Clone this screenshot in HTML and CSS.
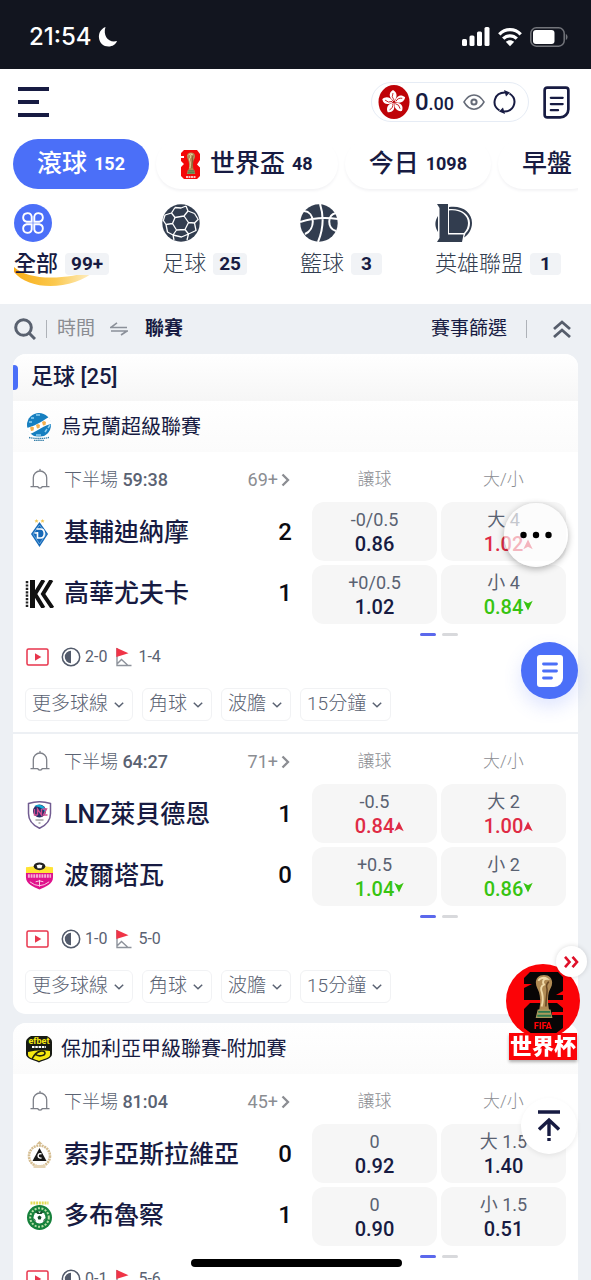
FILE: index.html
```html
<!DOCTYPE html>
<html lang="zh-Hant">
<head>
<meta charset="utf-8">
<meta name="viewport" content="width=device-width, initial-scale=1">
<title>滾球</title>
<link rel="stylesheet" href="styles.css">
</head>
<body>
<svg class="sprite" aria-hidden="true">
  <symbol id="bell" viewBox="0 0 20 22"><path d="M3.3 17.5V9.2a6.7 6.7 0 0 1 13.4 0v8.3M1 18.2h6.8c.3 1.800 4.100 1.800 4.400 0H19M10 2.300V.8" fill="none" stroke="#7d8088" stroke-width="1.300" stroke-linecap="round"/></symbol>
  <symbol id="next" viewBox="0 0 8 14"><path d="M1 1.500 6.500 7 1 12.500" fill="none" stroke="#8b8d92" stroke-width="2.300"/></symbol>
  <symbol id="down" viewBox="0 0 10 6"><path d="M.8.8 5 4.800 9.200.8" fill="none" stroke="#5a6272" stroke-width="1.500"/></symbol>
  <symbol id="live" viewBox="0 0 24 18"><rect x="1" y="1" width="21" height="16" rx="1.500" fill="#fff" stroke="#e8354c" stroke-width="1.500"/><path d="M9 5.300v7.400L15.300 9z" fill="#e8354c"/></symbol>
  <symbol id="half" viewBox="0 0 20 20"><circle cx="10" cy="10" r="8.700" fill="none" stroke="#525a6b" stroke-width="1.500"/><path d="M10 3.800a6.200 6.200 0 0 0 0 12.400z" fill="#525a6b"/></symbol>
  <symbol id="corner" viewBox="0 0 18 20"><path d="M2 1v17.500h14.500M2.500 16.500 6.500 12.500l6 5.500" fill="none" stroke="#8d929b" stroke-width="1.400"/><path d="M1.300.8 13.500 6.300 1.300 10z" fill="#f03447"/></symbol>
  <symbol id="up-arrow" viewBox="0 0 10 11"><path d="M5 .5 9.700 10.300 5 7.800.3 10.300z"/></symbol>
  <symbol id="down-arrow" viewBox="0 0 10 11"><path d="M5 10.500.3.700 5 3.200 9.700.7z"/></symbol>
  <symbol id="trophy" viewBox="0 0 20 48"><path d="M10 1c5.500 0 8.500 3.500 8.500 8 0 4-2.500 6.500-3.500 10-1 4-1.200 10 0 17l1.500 5H4l1.300-5c1.200-7 .8-12-.5-17C4 16 1.500 13 1.500 9c0-4.500 3-8 8.500-8z" fill="#b18b54"/><path d="M4 7c2-3 6-4 9-2-4 0-5 3-3 6-3 1-4 5-2 9 1 4 1 9-.5 14" fill="none" stroke="#efd9a7" stroke-width="2"/><path d="M15 8c-2 2-3 4-2 7s-1 8-1 19" fill="none" stroke="#684621" stroke-width="1.600"/><path d="M3.500 37h13.300l2 9H1.300z" fill="#a99a5d"/><path d="M4 39.500h12.500M3 43.500h14.500" stroke="#2c784c" stroke-width="2"/></symbol>
  <symbol id="slip" viewBox="0 0 26 32"><path d="M4 1.500h18a2.500 2.500 0 0 1 2.500 2.500v18.500a8 8 0 0 1-8 8H4A2.500 2.500 0 0 1 1.500 28V4A2.500 2.500 0 0 1 4 1.500z" fill="#fff" stroke="#171b42" stroke-width="2.600"/><path d="M7.500 11.500h11.500M7.500 17.500h11.500M7.500 23.500h7" stroke="#171b42" stroke-width="2.200" stroke-linecap="round"/></symbol>
</svg>

<div class="app">
  <div class="status">
    <div class="status-left"><span class="clock">21:54</span>
      <svg width="20" height="22" viewBox="0 0 20 22"><path d="M7.500 1C2.500 3 .5 7.500 1 12c.6 5 4.500 8.500 9.500 8.500 4 0 7.300-2.200 8.500-5.500C11 17.500 4.500 10 7.500 1z" fill="#fff"/></svg>
    </div>
    <div class="status-right">
      <svg width="28" height="20" viewBox="0 0 28 20" fill="#fff"><rect x="0" y="12" width="5" height="7" rx="1.500"/><rect x="7.500" y="8.500" width="5" height="10.500" rx="1.500"/><rect x="15" y="4.500" width="5" height="14.500" rx="1.500"/><rect x="22.500" y="0" width="5" height="19" rx="1.500"/></svg>
      <svg width="24" height="20" viewBox="0 0 24 20"><g fill="none" stroke="#fff" stroke-width="3.300"><path d="M1.300 7.300c6-6.200 15.400-6.200 21.400 0"/><path d="M5.200 11.700c3.900-3.900 9.700-3.900 13.600 0"/></g><path d="M7.800 14.800c2.500-2.200 5.900-2.200 8.400 0L12 19.200z" fill="#fff"/></svg>
      <svg width="38" height="20" viewBox="0 0 38 20"><rect x=".8" y=".8" width="33.400" height="18.400" rx="5.500" fill="none" stroke="#73757b" stroke-width="1.500"/><rect x="3" y="3" width="21.500" height="14" rx="3" fill="#fff"/><path d="M35.800 7c2.300 1 2.300 5 0 6z" fill="#73757b"/></svg>
    </div>
  </div>

  <header class="top">
    <button class="plain" aria-label="選單"><svg width="31" height="30" viewBox="0 0 31 30"><path d="M0 2h31M0 15h21M0 28h31" stroke="#171b42" stroke-width="4"/></svg></button>
    <div class="top-right">
      <div class="wallet">
        <svg width="32" height="34" viewBox="0 0 32 34"><ellipse cx="16" cy="17" rx="15.500" ry="17" fill="#bf0308"/><g transform="translate(16 17)" fill="#fff"><path d="M0-1C-5-4-6-9-1-12c4 2 5 7 1 11z"/><path transform="rotate(72)" d="M0-1C-5-4-6-9-1-12c4 2 5 7 1 11z"/><path transform="rotate(144)" d="M0-1C-5-4-6-9-1-12c4 2 5 7 1 11z"/><path transform="rotate(216)" d="M0-1C-5-4-6-9-1-12c4 2 5 7 1 11z"/><path transform="rotate(288)" d="M0-1C-5-4-6-9-1-12c4 2 5 7 1 11z"/></g><g transform="translate(16 17)" fill="none" stroke="#bf0308" stroke-width=".8"><path d="M0-2Q-3-5-1-9"/><path transform="rotate(72)" d="M0-2Q-3-5-1-9"/><path transform="rotate(144)" d="M0-2Q-3-5-1-9"/><path transform="rotate(216)" d="M0-2Q-3-5-1-9"/><path transform="rotate(288)" d="M0-2Q-3-5-1-9"/></g></svg>
        <span class="balance"><b>0</b>.00</span>
        <button class="plain" aria-label="顯示餘額"><svg width="22" height="18" viewBox="0 0 22 18" fill="none" stroke="#656b78" stroke-width="1.500"><path d="M1 9c5.500-9.500 14.500-9.500 20 0-5.500 9.500-14.500 9.500-20 0z"/><circle cx="11" cy="9" r="2.600" stroke-width="2"/></svg></button>
        <button class="plain" aria-label="重新整理"><svg width="23" height="24" viewBox="0 0 23 24"><path d="M6.500 20.500C-2 15 1 2.500 12 2.500M16.500 3.500c8.500 5.500 5.500 18-5.500 18" fill="none" stroke="#171b42" stroke-width="2"/><path d="M11 0l6 2.500-4 4zM12 24l-6-2.500 4-4z" fill="#171b42"/></svg></button>
      </div>
      <button class="plain" aria-label="注單"><svg width="27" height="33"><use href="#slip"/></svg></button>
    </div>
  </header>

  <nav class="tabs">
    <button class="tab active">滾球 <span>152</span></button>
    <button class="tab featured"><svg width="20" height="29" viewBox="0 0 20 29"><path d="M3 0h13l3 4v6l-3 4.500 3 3V26l-3 3H3l-3-3v-9l3-3-3-3V8h3V6H0V3z" fill="#f30808"/><use href="#trophy" x="5" y="2" width="10" height="23"/><path d="M5 27h10" stroke="#fff" stroke-width="1.500" stroke-dasharray="2 .5"/></svg>世界盃 <span>48</span></button>
    <button class="tab">今日 <span>1098</span></button>
    <button class="tab">早盤</button>
  </nav>

  <nav class="sports">
    <button class="sport selected">
      <svg width="38" height="38" viewBox="0 0 38 38"><circle cx="19" cy="19" r="19" fill="#4b6ff8"/><g fill="none" stroke="#fff" stroke-width="1.900"><path d="M17.700 17.700h-5a4.300 4.300 0 1 1 5-5zM20.300 17.700h5a4.300 4.300 0 1 0-5-5zM17.700 20.300h-5a4.300 4.300 0 1 0 5 5zM20.300 20.300h5a4.300 4.300 0 1 1-5 5z"/></g></svg>
      <span class="sport-label">全部 <b>99+</b></span>
      <svg class="swoosh" width="82" height="20" viewBox="0 0 82 20"><defs><linearGradient id="gold"><stop stop-color="#f8ad17"/><stop offset=".5" stop-color="#fbc94f"/><stop offset="1" stop-color="#fff3d4"/></linearGradient></defs><path d="M0 0c14 13 48 14 82 3C60 23 16 25 0 5z" fill="url(#gold)"/></svg>
    </button>
    <button class="sport">
      <svg width="38" height="38" viewBox="0 0 38 38"><circle cx="19" cy="19" r="18.700" fill="#323d4f"/><g fill="none" stroke="#fff" stroke-width="1.300" stroke-linejoin="round"><path d="M13 13.500l9-1.500 4.500 6.500-3.500 7-8.500.5-4-6.500zM13 13.500 9.500 9 13 3.500M22 12l4-5-2-5M26.500 18.500l6 .5 4-4M23 25.500l3.500 4.500-1.500 6M14.500 26l-3.500 5 1 5M10.500 19.500 4 20.500 1 16M9.500 9 3 11M26 7l6.500 2.500M32.500 19 34 26.500l-7.500 3.500M4 20.500 5.500 28l5.500 3M26.500 30l-7 3-8.500-2M13 3.500l6 .5 5-2M32.500 9.500 36 15M3 11l-1.500 5"/></g></svg>
      <span class="sport-label">足球 <b>25</b></span>
    </button>
    <button class="sport">
      <svg width="38" height="38" viewBox="0 0 38 38"><circle cx="19" cy="19" r="18.700" fill="#323d4f"/><path d="M0 18c12-4 25-5 38-3M20 0c4 12 3 26-2 38M4 7c11 1 12 18 1 23M36 9c-9 2-9 15 0 18" fill="none" stroke="#fff" stroke-width="2"/></svg>
      <span class="sport-label">籃球 <b>3</b></span>
    </button>
    <button class="sport">
      <svg width="38" height="38" viewBox="0 0 38 38"><path d="M14 3c13-2 23 5 23 16 0 7-4 12-8 14.500l1.500-4C34 26 35 23 35 19c0-9-9-15-21-14z" fill="#323d4f"/><path d="M14 6.500c10-1.500 19 4 19 12.500 0 4-1.500 7-4 10H14zM2 0h11v30.500h15.500L27 38H2l2.500-4V4zM3 12v16c-3.500-5-3.500-11 0-16z" fill="#323d4f"/></svg>
      <span class="sport-label">英雄聯盟 <b>1</b></span>
    </button>
  </nav>

  <main class="content">
    <div class="filters">
      <div class="filter-group">
        <button class="plain" aria-label="搜尋"><svg width="22" height="22" viewBox="0 0 22 22" fill="none" stroke="#59616f" stroke-width="3"><circle cx="9.500" cy="9.500" r="7.800"/><path d="m15 15 6 6"/></svg></button>
        <i class="bar"></i>
        <button class="plain muted">時間</button>
        <svg class="swap" width="18" height="14" viewBox="0 0 18 14" fill="none" stroke="#8b9099" stroke-width="1.600"><path d="M0 5.500h17M7 .8 1 5.300M1 9h17M17 9l-6 4"/></svg>
        <button class="plain strong">聯賽</button>
      </div>
      <div class="filter-group">
        <button class="plain picker">賽事篩選</button>
        <i class="bar wide"></i>
        <button class="plain" aria-label="全部收合"><svg width="18" height="18" viewBox="0 0 18 18" fill="none" stroke="#565d6b" stroke-width="2.800"><path d="m1 9 8-7 8 7M1 17l8-7 8 7"/></svg></button>
      </div>
    </div>

    <section class="card">
      <h2 class="card-title">足球 [25]</h2>
      <h3 class="league"><svg width="28" height="28" viewBox="0 0 28 28"><circle cx="14" cy="12" r="12" fill="#167fc0"/><path d="M1 15C8 14 16 9 24 4l3 7C19 12 13 18 5 21z" fill="#fff"/><path d="M6 5h3m2-3h4M4 9h3m13 10 2-3m1-1 2-3M11 22h5" stroke="#8fd0f0" stroke-width="1.500"/><g fill="#f5b04e"><path d="M5 14.500l2-1 2 1-.5 3-2.500.5zM11 12l2-1 2 1-.5 3-2.500.5zM17 9l2-1 2 1-.5 3-2.500.5z"/></g><path d="M4 22c6 2 14 2 20 0v3c-6 2-14 2-20 0z" fill="#fff"/><path d="M4 24.500q10 2 20 0M9 27.300h10" fill="none" stroke="#347ea8" stroke-width="1.300" stroke-dasharray="1.500 .6"/></svg>烏克蘭超級聯賽</h3>

      <article class="match">
        <div class="info">
          <div class="match-head"><span class="logo"><svg width="20" height="23"><use href="#bell"/></svg></span><span>下半場 <b>59:38</b></span><a href="#" class="more">69+<svg width="9" height="14"><use href="#next"/></svg></a></div>
          <div class="team"><svg class="logo" width="28" height="28" viewBox="0 0 28 28"><path d="m14 3 8.500 12L14 28 5.500 15z" fill="#1769b7"/><path d="m14 6 6.500 9L14 25 7.500 15z" fill="none" stroke="#74b3e6" stroke-width=".8"/><path d="M11 10h4c5 0 5 9 0 9h-3v-6M9 14h3" fill="none" stroke="#fff" stroke-width="1.600"/><path d="m11 0 .6 1.200 1.400.2-1 1 .3 1.400-1.300-.7-1.300.7.300-1.400-1-1 1.400-.2zM17 0l.6 1.200 1.400.2-1 1 .3 1.400-1.300-.7-1.300.7.300-1.400-1-1 1.400-.2z" fill="#f0c95a"/></svg><strong>基輔迪納摩</strong><output>2</output></div>
          <div class="team"><svg class="logo" width="28" height="28" viewBox="0 0 28 28"><path d="M1.500 1v26" stroke="#222" stroke-width="2.500" stroke-dasharray="2.200 1.200"/><path d="M7 0v28" stroke="#111" stroke-width="5"/><path d="M18 0 9.500 14l8.500 14M26 0l-8.500 14L27 28" fill="none" stroke="#111" stroke-width="4"/></svg><strong>高華尤夫卡</strong><output>1</output></div>
        </div>
        <div class="odds">
          <span class="market">讓球</span><span class="market">大/小</span>
          <button class="odd"><span>-0/0.5</span><b>0.86</b></button>
          <button class="odd"><span>大 4</span><b class="rise">1.02<svg width="10" height="11"><use href="#up-arrow"/></svg></b></button>
          <button class="odd"><span>+0/0.5</span><b>1.02</b></button>
          <button class="odd"><span>小 4</span><b class="fall">0.84<svg width="10" height="11"><use href="#down-arrow"/></svg></b></button>
          <div class="pager"><i class="on"></i><i></i></div>
        </div>
        <div class="stats"><svg width="24" height="18"><use href="#live"/></svg><svg class="half" width="20" height="20"><use href="#half"/></svg>2-0<svg class="corner" width="18" height="20"><use href="#corner"/></svg>1-4</div>
        <div class="chips"><button>更多球線<svg width="10" height="6"><use href="#down"/></svg></button><button>角球<svg width="10" height="6"><use href="#down"/></svg></button><button>波膽<svg width="10" height="6"><use href="#down"/></svg></button><button>15分鐘<svg width="10" height="6"><use href="#down"/></svg></button></div>
      </article>

      <article class="match">
        <div class="info">
          <div class="match-head"><span class="logo"><svg width="20" height="23"><use href="#bell"/></svg></span><span>下半場 <b>64:27</b></span><a href="#" class="more">71+<svg width="9" height="14"><use href="#next"/></svg></a></div>
          <div class="team"><svg class="logo" width="28" height="28" viewBox="0 0 28 28"><path d="M3 2.500Q14-1 25 2.500v10C25 20 19 25 14 27.300 9 25 3 20 3 12.500z" fill="#fff" stroke="#715c91" stroke-width="1.500"/><circle cx="14" cy="10" r="6.500" fill="#242e68"/><path d="M9 5c6-4 13 2 11 7-2-4-5-6-11-7z" fill="#12a9d4"/><path d="M9 8v6h3M12 14V8l4 6V8m1 0h4l-3 6h4" fill="none" stroke="#d04d91" stroke-width="1.400"/><path d="M10 19h8m-5 3h2" stroke="#777" stroke-width="1"/></svg><strong>LNZ萊貝德恩</strong><output>1</output></div>
          <div class="team"><svg class="logo" width="30" height="28" viewBox="0 0 30 28"><path d="M1 5q14-2 28 0v8H1z" fill="#ffe334"/><path d="M1 11h28v4c0 8-8 10-14 13C9 25 1 23 1 15z" fill="#df128c"/><ellipse cx="15" cy="4" rx="6" ry="4" fill="#222"/><path d="m12 3 3-1 3 1-1 3h-4z" fill="#fff"/><path d="M3 14h24" stroke="#f7add6" stroke-width="3.500" stroke-dasharray="2 .8"/><path d="M15 18v7M11 20l4-1 4 1M5 20q10 8 20 0" fill="none" stroke="#fbd1e6" stroke-width="1"/></svg><strong>波爾塔瓦</strong><output>0</output></div>
        </div>
        <div class="odds">
          <span class="market">讓球</span><span class="market">大/小</span>
          <button class="odd"><span>-0.5</span><b class="rise">0.84<svg width="10" height="11"><use href="#up-arrow"/></svg></b></button>
          <button class="odd"><span>大 2</span><b class="rise">1.00<svg width="10" height="11"><use href="#up-arrow"/></svg></b></button>
          <button class="odd"><span>+0.5</span><b class="fall">1.04<svg width="10" height="11"><use href="#down-arrow"/></svg></b></button>
          <button class="odd"><span>小 2</span><b class="fall">0.86<svg width="10" height="11"><use href="#down-arrow"/></svg></b></button>
          <div class="pager"><i class="on"></i><i></i></div>
        </div>
        <div class="stats"><svg width="24" height="18"><use href="#live"/></svg><svg class="half" width="20" height="20"><use href="#half"/></svg>1-0<svg class="corner" width="18" height="20"><use href="#corner"/></svg>5-0</div>
        <div class="chips"><button>更多球線<svg width="10" height="6"><use href="#down"/></svg></button><button>角球<svg width="10" height="6"><use href="#down"/></svg></button><button>波膽<svg width="10" height="6"><use href="#down"/></svg></button><button>15分鐘<svg width="10" height="6"><use href="#down"/></svg></button></div>
      </article>
    </section>

    <section class="card">
      <h3 class="league"><svg width="28" height="28" viewBox="0 0 28 28"><path d="M6 1h16c3 2 5 3 5 6v12c0 5-8 6-13 8.500C9 25 1 24 1 19V7c0-3 2-4 5-6z" fill="#171a13"/><text x="14" y="8.500" text-anchor="middle" class="efbet">efbet</text><path d="M7 12h14" stroke="#fff" stroke-width="1.800" stroke-dasharray="2.500 .8"/><path d="M3 17q11-3 22-1v4c0 3-7 4-11 6-4-2-11-3-11-6z" fill="#f5e711"/><path d="M7 24c5-10 13-9 13-6s-7 4-10 1" fill="none" stroke="#22240b" stroke-width="1.600"/></svg>保加利亞甲級聯賽-附加賽</h3>
      <article class="match">
        <div class="info">
          <div class="match-head"><span class="logo"><svg width="20" height="23"><use href="#bell"/></svg></span><span>下半場 <b>81:04</b></span><a href="#" class="more">45+<svg width="9" height="14"><use href="#next"/></svg></a></div>
          <div class="team"><svg class="logo" width="28" height="28" viewBox="0 0 28 28"><circle cx="14" cy="15" r="10.500" fill="#fff" stroke="#d5bd91" stroke-width="2.600" stroke-dasharray="2 .7"/><path d="m11 3 3-3 3 3z" fill="#d5bd91"/><path d="m14 7 7 13H7z" fill="#171717"/><path d="M16 13c-4-2-5 5 0 4" fill="none" stroke="#fff" stroke-width="1.400"/><path d="M8 24h12v3H8z" fill="#e5d4b5"/></svg><strong>索非亞斯拉維亞</strong><output>0</output></div>
          <div class="team"><svg class="logo" width="28" height="30" viewBox="0 0 28 30"><path d="M5 2h18" stroke="#e2dc55" stroke-width="3" stroke-dasharray="2 .8"/><circle cx="14" cy="16.500" r="12.500" fill="#16813b"/><circle cx="14" cy="16.500" r="9.300" fill="none" stroke="#b9dfa7" stroke-width="2" stroke-dasharray="2 1.500"/><circle cx="14" cy="16.500" r="6" fill="#fff"/><path d="m14 14.500 2 1.500-.8 2.500h-2.400L12 16zM10 11l2-1 2 2 2-2 2 1-2 2h-4zM8 17l2 2v3zM20 17l-2 2v3z" fill="#164d2b"/></svg><strong>多布魯察</strong><output>1</output></div>
        </div>
        <div class="odds">
          <span class="market">讓球</span><span class="market">大/小</span>
          <button class="odd"><span>0</span><b>0.92</b></button>
          <button class="odd"><span>大 1.5</span><b>1.40</b></button>
          <button class="odd"><span>0</span><b>0.90</b></button>
          <button class="odd"><span>小 1.5</span><b>0.51</b></button>
          <div class="pager"><i class="on"></i><i></i></div>
        </div>
        <div class="stats"><svg width="24" height="18"><use href="#live"/></svg><svg class="half" width="20" height="20"><use href="#half"/></svg>0-1<svg class="corner" width="18" height="20"><use href="#corner"/></svg>5-6</div>
      </article>
    </section>
  </main>

  <button class="float dots" aria-label="更多"><svg width="32" height="8" viewBox="0 0 32 8"><circle cx="3.500" cy="4" r="3.200"/><circle cx="16" cy="4" r="3.200"/><circle cx="28.500" cy="4" r="3.200"/></svg></button>
  <button class="float betslip" aria-label="投注單"><svg width="26" height="32" viewBox="0 0 26 32"><path d="M3 0h20a3 3 0 0 1 3 3v20a9 9 0 0 1-9 9H3a3 3 0 0 1-3-3V3a3 3 0 0 1 3-3z" fill="#fff"/><path d="M6.500 9h13M6.500 16h13M6.500 23h8" stroke="#4b6ff8" stroke-width="2.800" stroke-linecap="round"/></svg></button>
  <a class="float cup" href="#">
    <svg width="74" height="74" viewBox="0 0 74 74"><circle cx="37" cy="37" r="37" fill="#fb0307"/><path d="M24 8h28l5 5v14l-7 4h7v5H18V24l8-4h-8v-6zM24 39h27l6 5v4H46v3h11v13l-8 6H26l-8-6V45z" fill="#080505"/><use href="#trophy" x="28" y="10" width="20" height="46"/><text x="37" y="65" text-anchor="middle" class="fifa">FIFA</text></svg>
    <span>世界杯</span>
  </a>
  <button class="float collapse" aria-label="收起"><svg width="16" height="12" viewBox="0 0 16 12" fill="none" stroke="#df1029" stroke-width="2.600"><path d="m1 .8 4.500 5.200L1 11.200M8.500.8 13 6l-4.500 5.200"/></svg></button>
  <button class="float to-top" aria-label="回到頂部"><svg width="22" height="32" viewBox="0 0 22 32" fill="none" stroke="#171b42" stroke-width="3.400"><path d="M0 2h22M1 19.500 11 10l10 9.500M11 10v16M11 28v3"/></svg></button>
  <div class="home-indicator"></div>
</div>
</body>
</html>
```
FILE: styles.css
```css
* { box-sizing: border-box; }
body {
  margin: 0;
  color: #171b42;
  background: #fff;
  font-family: Roboto, "Noto Sans CJK TC", sans-serif;
  line-height: 1.2;
}
button {
  margin: 0;
  border: 0;
  padding: 0;
  background: none;
  color: inherit;
  font: inherit;
  white-space: nowrap;
}
a { color: inherit; text-decoration: none; }
svg { display: block; flex: none; }
.sprite { position: absolute; width: 0; height: 0; }
.app {
  position: relative;
  display: flex;
  flex-direction: column;
  height: 100vh;
  overflow: hidden;
}

.status {
  display: flex;
  justify-content: space-between;
  align-items: center;
  flex: none;
  height: 69px;
  padding: 4px 23px 0 29px;
  background: #12151f;
  color: #fff;
}
.status-left { display: flex; align-items: center; gap: 6px; }
.status-right { display: flex; align-items: center; gap: 8px; }
.clock { font: 500 24px/32px Inter, sans-serif; }

.top {
  display: flex;
  justify-content: space-between;
  align-items: center;
  flex: none;
  height: 66px;
  padding: 0 21px 0 18px;
}
.top-right { display: flex; align-items: center; gap: 14px; }
.wallet {
  display: flex;
  align-items: center;
  gap: 8px;
  height: 40px;
  padding: 0 12px 0 6px;
  border: 1px solid #e6ecf5;
  border-radius: 20px;
}
.wallet .balance { display: block; margin: 0 1px 0 -3px; font-size: 18px; font-weight: 500; }
.balance b { font-size: 24px; font-weight: 500; }
.plain { display: flex; align-items: center; }

.tabs {
  display: flex;
  flex: none;
  gap: 7px;
  margin: 4px 13px 0;
  padding-bottom: 5px;
  overflow: hidden;
}
.tab {
  display: flex;
  align-items: center;
  flex: none;
  gap: 7px;
  height: 50px;
  padding: 0 24px;
  border-radius: 25px;
  font-size: 25px;
  font-weight: 500;
  box-shadow: 0 2px 3px #f3f3f5;
}
.tab span { font-size: 18px; font-weight: 700; }
.tab.active { background: #4b6ff8; color: #fff; box-shadow: none; }
.featured { padding: 0 25px; }
.featured svg { margin-right: 2px; }

.sports {
  display: flex;
  flex: none;
  gap: 53px;
  padding: 10px 14px 25px;
}
.sport {
  position: relative;
  display: flex;
  flex-direction: column;
  align-items: flex-start;
  gap: 7px;
}
.sport-label {
  position: relative;
  z-index: 1;
  display: flex;
  align-items: center;
  gap: 7px;
  color: #323d4f;
  font-size: 22px;
  line-height: 30px;
  font-weight: 300;
}
.sport-label b {
  min-width: 31px;
  padding: 0 6px;
  border-radius: 4px;
  background: #f1f3f6;
  color: #171b42;
  font-size: 19px;
  line-height: 22px;
  font-weight: 700;
}
.selected .sport-label { color: #171b42; font-weight: 500; }
.swoosh { position: absolute; left: 0; bottom: -8px; }

.content {
  flex: 1;
  min-height: 0;
  overflow: auto;
  scrollbar-width: none;
  padding: 0 13px;
  background: #edf0f4;
}
.filters {
  display: flex;
  justify-content: space-between;
  align-items: center;
  height: 50px;
  padding: 0 7px 0 1px;
  font-size: 19px;
}
.filter-group { display: flex; align-items: center; }
.bar { width: 1px; height: 18px; margin: 0 10px; background: #aeb2b8; }
.bar.wide { margin: 0 26px 0 19px; }
.muted { color: #8b8d92; }
.swap { margin: 0 17px 0 15px; }
.strong { font-weight: 700; }

.card {
  margin-bottom: 9px;
  border-radius: 13px;
  background: #fff;
  overflow: hidden;
}
.card-title {
  display: flex;
  align-items: center;
  gap: 13px;
  height: 47px;
  margin: 0;
  background: linear-gradient(#fff, #f6f6f6);
  font-size: 22px;
  font-weight: 500;
}
.card-title::before {
  width: 5px;
  height: 25px;
  border-radius: 0 4px 4px 0;
  background: #4b6ff8;
  content: "";
}
.league {
  display: flex;
  align-items: center;
  gap: 8px;
  height: 51px;
  margin: 0;
  padding: 1px 12px 0;
  background: linear-gradient(#fff, #fbfbfb);
  font-size: 20px;
  font-weight: 400;
}
.efbet { fill: #f5e711; font: 700 9px Roboto, sans-serif; }

.match {
  display: grid;
  grid-template-columns: minmax(0, 1fr) 254px;
  column-gap: 20px;
  padding: 0 12px 11px;
}
.match + .match { border-top: 2px solid #edf0f4; }
.info { display: grid; grid-template-rows: 50px 61px 61px; }
.match-head, .team { display: flex; align-items: center; gap: 10px; }
.match-head {
  padding-top: 5px;
  color: #5a6272;
  font-size: 18px;
  font-weight: 300;
}
.match-head b { font-weight: 500; }
.more { display: flex; align-items: center; gap: 3px; margin: 0 2px 0 auto; color: #8b8d92; font-weight: 400; }
.logo { display: flex; justify-content: center; width: 29px; }
.team strong { font-size: 25px; font-weight: 500; white-space: nowrap; }
.team output { margin-left: auto; color: #0b0b12; font-size: 24px; font-weight: 500; }
.odds {
  display: grid;
  grid-template-columns: 1fr 1fr;
  grid-template-rows: 46px 59px 59px 12px;
  gap: 4px;
  text-align: center;
}
.market { padding-top: 4px; color: #8b8d92; font-size: 17px; line-height: 46px; font-weight: 300; }
.odd {
  display: flex;
  flex-direction: column;
  align-items: center;
  justify-content: center;
  border-radius: 12px;
  background: #f6f6f6;
}
.odd span { color: #5a6272; font-size: 18px; line-height: 24px; }
.odd b { position: relative; font-size: 20px; line-height: 24px; font-weight: 500; }
.odd b svg { position: absolute; left: 100%; top: 7px; fill: currentColor; }
.odd .fall svg { top: 5px; }
.odd .rise { color: #df2b45; }
.odd .fall { color: #37c411; }
.pager { display: flex; grid-column: 1 / 3; justify-content: center; gap: 6px; padding-top: 5px; }
.pager i { width: 16px; height: 3px; border-radius: 2px; background: #d8d9dc; }
.pager .on { background: #5b68ec; }
.stats {
  display: flex;
  align-items: center;
  grid-column: 1 / 3;
  height: 34px;
  padding-left: 1px;
  color: #5a6272;
  font-size: 16px;
}
.half { margin: 0 4px 0 11px; }
.corner { margin: 0 5px 0 8px; }
.chips { display: flex; grid-column: 1 / 3; gap: 9px; margin-top: 14px; }
.chips button {
  display: flex;
  align-items: center;
  gap: 6px;
  height: 33px;
  padding: 0 8px 0 6px;
  border: 1px solid #f1f2f4;
  border-radius: 6px;
  color: #5a6272;
  font-size: 19px;
  font-weight: 300;
}

.float {
  position: absolute;
  display: flex;
  align-items: center;
  justify-content: center;
  border-radius: 50%;
}
.dots { top: 503px; right: 23px; width: 64px; height: 64px; background: rgba(255, 255, 255, .65); box-shadow: 0 2px 7px rgba(0, 0, 0, .3); }
.betslip { top: 642px; right: 13px; width: 57px; height: 57px; background: #4b6ff8; box-shadow: 0 8px 18px rgba(75, 111, 248, .18); }
.cup { top: 964px; right: 11px; flex-direction: column; border-radius: 0; }
.cup span {
  margin-top: -5px;
  padding: 0 1px;
  background: #fb0307;
  color: #fff;
  font-size: 22px;
  line-height: 27px;
  font-weight: 900;
  box-shadow: 0 2px 3px rgba(0, 0, 0, .3);
}
.fifa { fill: #fb0307; font: 900 9px Roboto, sans-serif; }
.collapse { top: 946px; right: 4px; width: 31px; height: 31px; background: #fff; box-shadow: 0 0 5px rgba(0, 0, 0, .15); }
.to-top { top: 1098px; right: 14px; width: 56px; height: 56px; background: #fff; box-shadow: 0 2px 5px rgba(0, 0, 0, .07); }
.home-indicator {
  position: absolute;
  bottom: 13px;
  left: 50%;
  width: 211px;
  height: 8px;
  margin-left: -105px;
  border-radius: 4px;
  background: #000;
}
```
